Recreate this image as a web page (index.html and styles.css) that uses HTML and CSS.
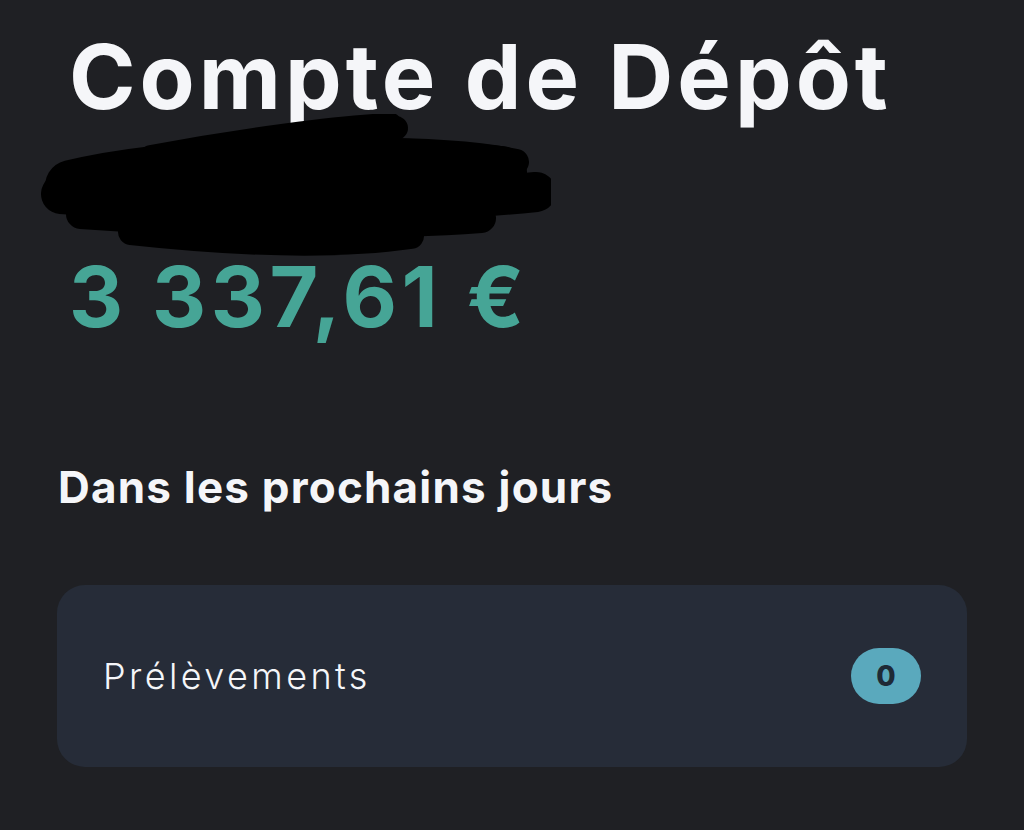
FILE: index.html
```html
<!DOCTYPE html>
<html lang="fr">
<head>
<meta charset="utf-8">
<title>Compte de Dépôt</title>
<link rel="stylesheet" href="styles.css">
</head>
<body>
<main class="page">
  <header class="account">
    <h1 class="title">Compte de Dépôt</h1>
    <svg class="redact" width="510" height="145" viewBox="0 0 510 145" aria-hidden="true">
      <g fill="none" stroke="#000" stroke-linecap="round">
        <path d="M30 72 C 120 50, 300 40, 460 58" stroke-width="52"/>
        <path d="M110 42 C 200 25, 300 12, 350 10" stroke-width="22"/>
        <path d="M300 18 L 355 14" stroke-width="24"/>
        <path d="M250 38 C 350 35, 430 38, 475 48" stroke-width="26"/>
        <path d="M20 80 C 150 90, 330 95, 495 78" stroke-width="40"/>
        <path d="M40 100 C 180 110, 330 112, 440 104" stroke-width="30"/>
        <path d="M90 118 C 200 130, 300 132, 370 122" stroke-width="26"/>
      </g>
    </svg>
    <p class="balance">3 337,61 €</p>
  </header>

  <section class="upcoming">
    <h2 class="section-title">Dans les prochains jours</h2>
    <div class="card">
      <span class="card-label">Prélèvements</span>
      <span class="badge">0</span>
    </div>
  </section>
</main>
</body>
</html>
```
FILE: styles.css
```css
html, body {
  margin: 0;
  padding: 0;
  background: #1f2024;
  height: 100%;
}

body {
  font-family: "Inter", "Noto Sans", sans-serif;
  color: #f5f6f9;
}

.page {
  padding: 27px 57px 0 57px;
  display: flex;
  flex-direction: column;
}

.account {
  display: flex;
  flex-direction: column;
  padding-left: 12px;
}

.title {
  margin: 0;
  font-size: 90px;
  font-weight: 700;
  line-height: 100px;
  letter-spacing: 4px;
}

.redact {
  display: block;
  margin: -13px 0 0 -28px;
}

.balance {
  margin: -12px 0 0 0;
  font-size: 84px;
  font-weight: 700;
  line-height: 100px;
  letter-spacing: 4.5px;
  color: #46a596;
}

.upcoming {
  margin-top: 112px;
  display: flex;
  flex-direction: column;
  gap: 70px;
}

.section-title {
  margin: 0;
  padding-left: 1px;
  font-size: 44px;
  font-weight: 700;
  line-height: 56px;
  letter-spacing: 1.2px;
}

.card {
  background: #262c38;
  border-radius: 28px;
  height: 182px;
  width: 910px;
  display: flex;
  align-items: center;
  justify-content: space-between;
  padding: 0 46px;
  box-sizing: border-box;
}

.card-label {
  font-size: 36px;
  font-weight: 300;
  letter-spacing: 3.4px;
  color: #f5f6f9;
}

.badge {
  width: 70px;
  height: 56px;
  border-radius: 28px;
  background: #5aa9bd;
  color: #1f2a36;
  font-weight: 800;
  font-size: 28px;
  letter-spacing: 0;
  display: flex;
  align-items: center;
  justify-content: center;
}
```
